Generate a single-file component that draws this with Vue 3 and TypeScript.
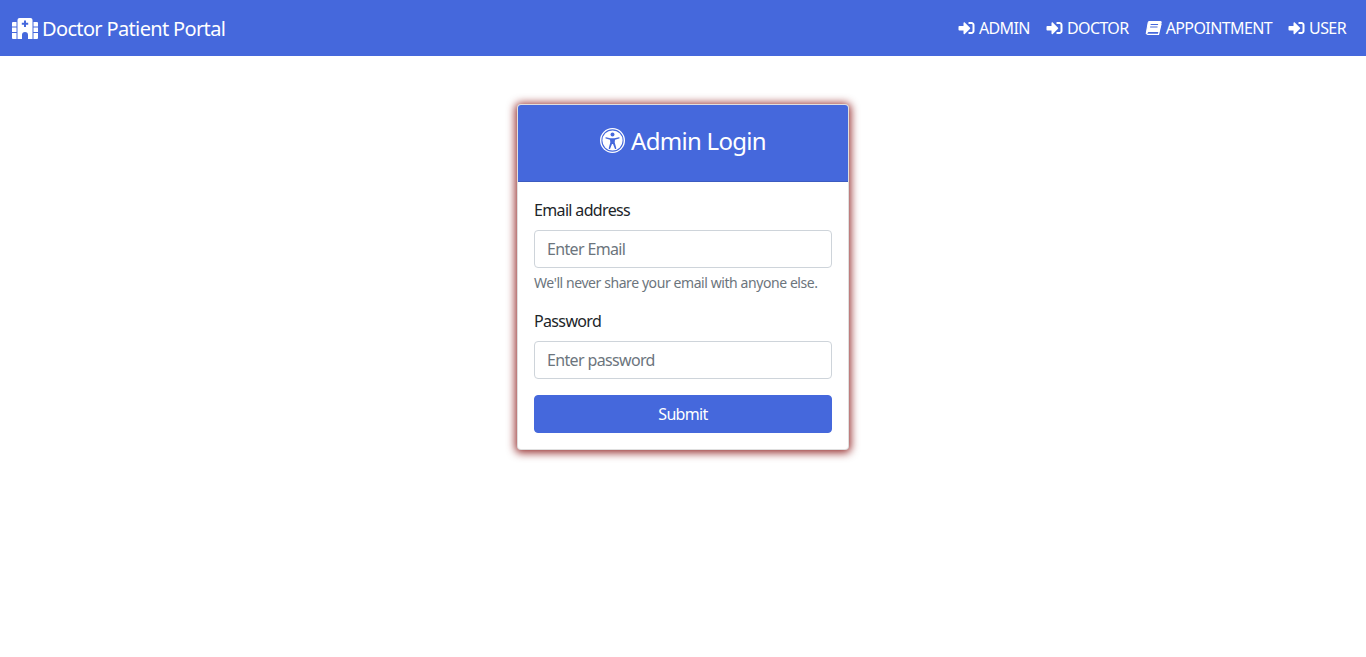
<script setup lang="ts">
const navItems = [
  { label: 'ADMIN', icon: 'in' },
  { label: 'DOCTOR', icon: 'in' },
  { label: 'APPOINTMENT', icon: 'book' },
  { label: 'USER', icon: 'in' }
]
</script>

<template>
  <nav class="navbar">
    <a class="brand" href="#">
      <svg class="brand-icon" viewBox="0 0 26 21" fill="currentColor">
        <path fill-rule="evenodd" d="M5.500 2a2 2 0 0 1 2-2h11a2 2 0 0 1 2 2v19H16v-4a3 3 0 0 0-6 0v4H5.500zM12 2.500v2.200H9.800v2H12v2.200h2V6.700h2.200v-2H14V2.500z" />
        <path d="M0 5a1 1 0 0 1 1-1h3.500v4.500H0zM0 9.500h4.500V14H0zM0 15h4.500v6H1a1 1 0 0 1-1-1zM21.500 4H25a1 1 0 0 1 1 1v3.500h-4.500zM21.500 9.500H26V14h-4.500zM21.500 15H26v5a1 1 0 0 1-1 1h-3.500z" />
      </svg>
      <span>Doctor Patient Portal</span>
    </a>
    <ul class="nav-list">
      <li v-for="item in navItems" :key="item.label">
        <a class="nav-link" href="#">
          <svg v-if="item.icon === 'in'" class="nav-icon" viewBox="0 0 512 512" fill="currentColor">
            <path d="M416 448h-84c-6.600 0-12-5.400-12-12v-40c0-6.600 5.400-12 12-12h84c17.700 0 32-14.300 32-32V160c0-17.700-14.300-32-32-32h-84c-6.600 0-12-5.400-12-12V76c0-6.600 5.400-12 12-12h84c53 0 96 43 96 96v192c0 53-43 96-96 96zm-47-201L201 79c-15-15-41-4.500-41 17v96H24c-13.300 0-24 10.700-24 24v96c0 13.300 10.700 24 24 24h136v96c0 21.500 26 32 41 17l168-168c9.300-9.400 9.300-24.600 0-34z" />
          </svg>
          <svg v-else class="nav-icon book" viewBox="0 0 16 14" fill="none" stroke="currentColor">
            <path fill="currentColor" stroke-width="1" d="M4 .8h10.500c.6 0 .8.400.7 1L13 10.200H3.300L1.300 11.500 3 1.800C3.100 1.200 3.400.8 4 .8z" />
            <path stroke-width="1.300" d="M13 10.200H3.200c-1.800 0-2.300 2.800-.4 2.800h9.900l2.300-10" />
            <path stroke="#4568dc" stroke-width="1" d="M5.300 3.700h7M4.800 6h7" />
          </svg>
          <span>{{ item.label }}</span>
        </a>
      </li>
    </ul>
  </nav>

  <main class="page">
    <section class="card">
      <header class="card-header">
        <svg class="access-icon" viewBox="0 0 24 24">
          <circle cx="12" cy="12" r="12" fill="#fff" />
          <circle cx="12" cy="12" r="10.200" fill="none" stroke="#4568dc" stroke-width="1" />
          <circle cx="12" cy="6.300" r="1.900" fill="#4568dc" />
          <path fill="#4568dc" d="M5.800 8.800c-.700-.1-.9 1.100-.2 1.300l4 1.100.3 2.600-1.500 5.500c-.2.900.9 1.300 1.300.5l1.800-4.500h1l1.800 4.500c.4.800 1.500.4 1.300-.5l-1.500-5.500.3-2.600 4-1.100c.7-.2.500-1.400-.2-1.300l-4.500 1h-3.800z" />
        </svg>
        <h1>Admin Login</h1>
      </header>
      <form class="card-body" @submit.prevent>
        <div class="field">
          <label for="email">Email address</label>
          <input id="email" type="email" placeholder="Enter Email" />
          <small>We'll never share your email with anyone else.</small>
        </div>
        <div class="field">
          <label for="password">Password</label>
          <input id="password" type="password" placeholder="Enter password" />
        </div>
        <button type="submit">Submit</button>
      </form>
    </section>
  </main>
</template>

<style>
body {
  background: #fff;
}
</style>

<style scoped>
.navbar {
  display: flex;
  align-items: center;
  justify-content: space-between;
  height: 56px;
  padding: 0 12px;
  background-color: #4568dc;
  font-family: "Noto Sans", "Open Sans", sans-serif;
}

.brand {
  display: flex;
  align-items: center;
  gap: 4px;
  color: #fff;
  text-decoration: none;
  font-size: 20px;
  letter-spacing: -0.65px;
}

.brand-icon {
  width: 26px;
  height: 21px;
  margin-top: 1px;
}

.nav-list {
  display: flex;
  margin: 0;
  padding: 0;
  list-style: none;
}

.nav-link {
  display: flex;
  align-items: center;
  gap: 4px;
  padding: 8px;
  color: #fff;
  text-decoration: none;
  font-size: 16px;
  letter-spacing: -0.6px;
}

.nav-icon {
  width: 17px;
  height: 16px;
}

.page {
  min-height: 601px;
  padding-top: 48px;
  box-sizing: border-box;
  font-family: "Noto Sans", "Open Sans", sans-serif;
  color: #212529;
}

.card {
  width: 332px;
  box-sizing: border-box;
  margin: 0 auto;
  background: #fff;
  border: 1px solid rgba(0, 0, 0, 0.125);
  border-radius: 4px;
  box-shadow: 0 1px 9px 2px rgba(128, 0, 0, 0.8);
}

.card-header {
  display: flex;
  align-items: center;
  justify-content: center;
  gap: 6px;
  padding-bottom: 6px;
  height: 70px;
  background-color: #4568dc;
  border-bottom: 1px solid rgba(0, 0, 0, 0.125);
  border-radius: 3px 3px 0 0;
  color: #fff;
}

.card-header h1 {
  margin: 0;
  font-size: 24px;
  font-weight: 400;
  letter-spacing: -0.7px;
}

.access-icon {
  width: 25px;
  height: 25px;
}

.card-body {
  padding: 16px;
}

.field {
  display: flex;
  flex-direction: column;
  margin-bottom: 16px;
}

label {
  margin-bottom: 8px;
  font-size: 16px;
  line-height: 24px;
  letter-spacing: -0.65px;
}

input {
  box-sizing: border-box;
  height: 38px;
  padding: 6px 12px;
  border: 1px solid #ced4da;
  border-radius: 4px;
  font-family: inherit;
  font-size: 16px;
  letter-spacing: -0.65px;
  color: #212529;
}

input::placeholder {
  color: #6c757d;
  opacity: 1;
}

small {
  margin-top: 4px;
  font-size: 14px;
  line-height: 21px;
  letter-spacing: -0.42px;
  color: #6c757d;
}

button {
  display: block;
  width: 100%;
  height: 38px;
  border: 1px solid #4568dc;
  border-radius: 4px;
  background-color: #4568dc;
  color: #fff;
  font-family: inherit;
  font-size: 16px;
  letter-spacing: -0.65px;
  cursor: pointer;
}
</style>
